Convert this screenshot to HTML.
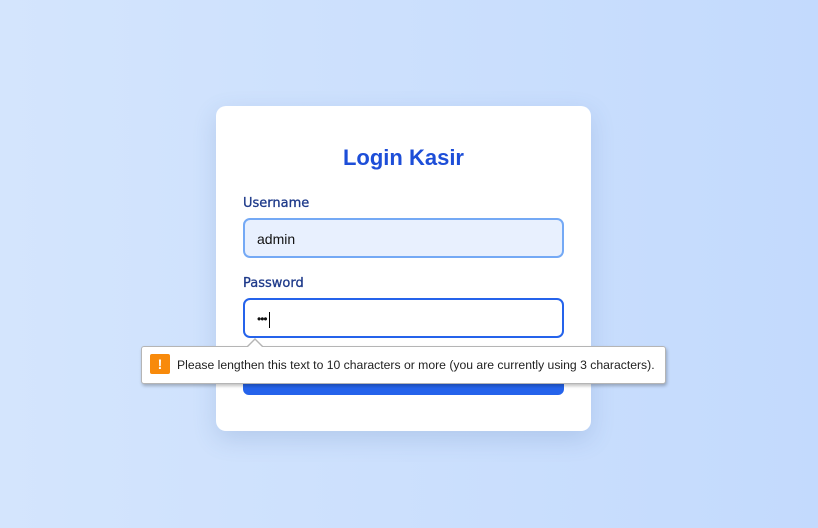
<!DOCTYPE html>
<html><head><style>
*{box-sizing:border-box;margin:0;padding:0}
html,body{width:818px;height:528px;overflow:hidden}
body{background:linear-gradient(90deg,#d4e5fd,#c3dafd);font-family:"DejaVu Sans","Liberation Sans",sans-serif;position:relative}
.card{position:absolute;left:216px;top:106px;width:375px;height:325px;background:#fff;border-radius:10px;box-shadow:0 8px 24px rgba(60,100,160,.18)}
h1{position:absolute;left:216px;width:375px;top:145px;text-align:center;font-family:"Liberation Sans",sans-serif;font-size:22px;font-weight:bold;color:#1d4ed8}
.lbl{position:absolute;left:243px;font-size:13px;color:#1e3a8a;-webkit-text-stroke:0.3px #1e3a8a}
.inp{position:absolute;left:243px;width:321px;height:40px;border-radius:7px;font-family:"Liberation Sans",sans-serif;font-size:14px;padding-left:12px;line-height:38px;color:#111}
.u{top:218px;background:#e8f0fe;border:2px solid #74a9f5}
.p{top:298px;background:#fff;border:2px solid #2563eb}
.btn{position:absolute;left:243px;top:370px;width:321px;height:25px;background:#2563eb;border-radius:0 0 6px 6px}
.tip{position:absolute;left:141px;top:346px;width:525px;height:38px;background:#fff;border:1px solid #b5b5b5;border-radius:3px;box-shadow:1px 2px 3px rgba(0,0,0,.25);font-family:"Liberation Sans",sans-serif;font-size:12.2px;color:#222;line-height:36px;padding-left:35px;white-space:nowrap}
.ic{position:absolute;left:8px;top:7px;width:20px;height:20px;background:#f88a0b;border-radius:2px;color:#fff;font-weight:bold;text-align:center;line-height:20px;font-size:14px}
.arr{position:absolute;left:246px;top:338px;width:0;height:0;border-left:9px solid transparent;border-right:9px solid transparent;border-bottom:9px solid #b5b5b5}
.arr2{position:absolute;left:247px;top:340px;width:0;height:0;z-index:3;border-left:8px solid transparent;border-right:8px solid transparent;border-bottom:8px solid #fff}
</style></head><body>
<div class="card"></div>
<h1>Login Kasir</h1>
<div class="lbl" style="top:196px">Username</div>
<div class="inp u">admin</div>
<div class="lbl" style="top:276px">Password</div>
<div class="inp p" style="font-size:12px;letter-spacing:-1px">•••<span style="display:inline-block;width:1px;height:16px;background:#000;vertical-align:middle;margin-left:2px"></span></div>
<div class="btn"></div>
<div class="arr"></div><div class="arr2"></div>
<div class="tip"><div class="ic">!</div>Please lengthen this text to 10 characters or more (you are currently using 3 characters).</div>
</body></html>
